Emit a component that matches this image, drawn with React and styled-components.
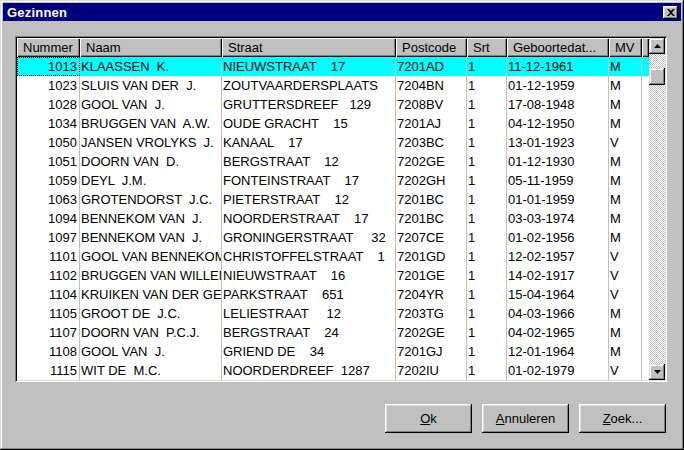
import React from "react";
import styled, { createGlobalStyle } from "styled-components";

const GlobalStyle = createGlobalStyle`
  body {
    margin: 0;
    background: #c0c0c0;
    font-family: "Liberation Sans", Arial, sans-serif;
  }
`;

const Window = styled.div`
  width: 684px;
  height: 450px;
  box-sizing: border-box;
  padding: 3px;
  background: #c0c0c0;
  display: flex;
  flex-direction: column;
  box-shadow: inset -1px -1px #000, inset 1px 1px #dfdfdf,
    inset -2px -2px #808080, inset 2px 2px #fff;
`;

const TitleBar = styled.div`
  height: 18px;
  background: #000080;
  display: flex;
  align-items: center;
  justify-content: space-between;
  padding: 0 3px 0 4px;
`;

const TitleText = styled.span`
  color: #fff;
  font-weight: bold;
  font-size: 13px;
  letter-spacing: 0.2px;
`;

const CloseButton = styled.div`
  width: 15px;
  height: 13px;
  background: #c0c0c0;
  display: flex;
  align-items: center;
  justify-content: center;
  box-shadow: inset -1px -1px #000, inset 1px 1px #fff,
    inset -2px -2px #808080, inset 2px 2px #dfdfdf;
`;

const Body = styled.div`
  flex: 1;
  display: flex;
  flex-direction: column;
  padding: 15px 14px 0 12px;
`;

const GridBox = styled.div`
  width: 652px;
  height: 346px;
  box-sizing: border-box;
  padding: 2px;
  background: #fff;
  display: flex;
  box-shadow: inset 1px 1px #808080, inset -1px -1px #fff,
    inset 2px 2px #000, inset -2px -2px #dfdfdf;
`;

const Table = styled.div`
  flex: 1;
  overflow: hidden;
`;

const cols = "63px 142px 174px 71px 40px 102px 33px 1fr";

const HeaderRow = styled.div`
  display: grid;
  grid-template-columns: ${cols};
  height: 19px;
`;

const HeaderCell = styled.div`
  background: #c0c0c0;
  box-sizing: border-box;
  padding-left: 6px;
  font-size: 13px;
  line-height: 19px;
  color: #000;
  white-space: nowrap;
  overflow: hidden;
  box-shadow: inset 1px 1px #fff, inset -1px -1px #000,
    inset -2px -2px #808080;
`;

const Row = styled.div`
  display: grid;
  grid-template-columns: ${cols};
  height: 19px;
  background: ${(p) => (p.$selected ? "#00ffff" : "#fff")};
`;

const Cell = styled.div`
  box-sizing: border-box;
  border-right: ${(p) => (p.$last ? "none" : "1px solid #c0c0c0")};
  font-size: 13px;
  line-height: 19px;
  color: #000;
  white-space: pre;
  overflow: hidden;
  padding: ${(p) => (p.$right ? "0 2px 0 0" : "0 0 0 1px")};
  text-align: ${(p) => (p.$right ? "right" : "left")};
  outline: ${(p) => (p.$focus ? "1px dotted #000" : "none")};
  outline-offset: -1px;
`;

const ScrollBar = styled.div`
  width: 16px;
  display: flex;
  flex-direction: column;
  background-color: #fff;
  background-image: repeating-conic-gradient(#c0c0c0 0 25%, #fff 0 50%);
  background-size: 2px 2px;
`;

const ScrollButton = styled.div`
  width: 16px;
  height: 16px;
  flex-shrink: 0;
  background: #c0c0c0;
  display: flex;
  align-items: center;
  justify-content: center;
  box-shadow: inset -1px -1px #000, inset 1px 1px #dfdfdf,
    inset -2px -2px #808080, inset 2px 2px #fff;
`;

const Thumb = styled(ScrollButton)`
  height: 17px;
  margin-top: 14px;
`;

const Track = styled.div`
  flex: 1;
`;

const ButtonRow = styled.div`
  display: flex;
  justify-content: flex-end;
  gap: 10px;
  margin-top: 22px;
  padding-right: 1px;
`;

const Button = styled.div`
  width: 87px;
  height: 29px;
  box-sizing: border-box;
  background: #c0c0c0;
  display: flex;
  align-items: center;
  justify-content: center;
  font-size: 13px;
  color: #000;
  box-shadow: inset -1px -1px #000, inset 1px 1px #fff,
    inset -2px -2px #808080, inset 2px 2px #dfdfdf;
`;

const headers = ["Nummer", "Naam", "Straat", "Postcode", "Srt", "Geboortedat...", "MV", ""];

const rows = [
  ["1013", "KLAASSEN  K.", "NIEUWSTRAAT    17", "7201AD", "1", "11-12-1961", "M"],
  ["1023", "SLUIS VAN DER  J.", "ZOUTVAARDERSPLAATS", "7204BN", "1", "01-12-1959", "M"],
  ["1028", "GOOL VAN  J.", "GRUTTERSDREEF   129", "7208BV", "1", "17-08-1948", "M"],
  ["1034", "BRUGGEN VAN  A.W.", "OUDE GRACHT    15", "7201AJ", "1", "04-12-1950", "M"],
  ["1050", "JANSEN VROLYKS  J.", "KANAAL    17", "7203BC", "1", "13-01-1923", "V"],
  ["1051", "DOORN VAN  D.", "BERGSTRAAT    12", "7202GE", "1", "01-12-1930", "M"],
  ["1059", "DEYL  J.M.", "FONTEINSTRAAT    17", "7202GH", "1", "05-11-1959", "M"],
  ["1063", "GROTENDORST  J.C.", "PIETERSTRAAT    12", "7201BC", "1", "01-01-1959", "M"],
  ["1094", "BENNEKOM VAN  J.", "NOORDERSTRAAT    17", "7201BC", "1", "03-03-1974", "M"],
  ["1097", "BENNEKOM VAN  J.", "GRONINGERSTRAAT     32", "7207CE", "1", "01-02-1956", "M"],
  ["1101", "GOOL VAN BENNEKOM", "CHRISTOFFELSTRAAT    1", "7201GD", "1", "12-02-1957", "V"],
  ["1102", "BRUGGEN VAN WILLEM", "NIEUWSTRAAT    16", "7201GE", "1", "14-02-1917", "V"],
  ["1104", "KRUIKEN VAN DER GEEST", "PARKSTRAAT    651", "7204YR", "1", "15-04-1964", "V"],
  ["1105", "GROOT DE  J.C.", "LELIESTRAAT     12", "7203TG", "1", "04-03-1966", "M"],
  ["1107", "DOORN VAN  P.C.J.", "BERGSTRAAT    24", "7202GE", "1", "04-02-1965", "M"],
  ["1108", "GOOL VAN  J.", "GRIEND DE    34", "7201GJ", "1", "12-01-1964", "M"],
  ["1115", "WIT DE  M.C.", "NOORDERDREEF  1287", "7202IU", "1", "01-02-1979", "V"],
];

const Arrow = ({ down }) => (
  <svg width="7" height="4" viewBox="0 0 7 4">
    <path d={down ? "M0 0H7L3.5 4Z" : "M3.5 0L7 4H0Z"} fill="#000" />
  </svg>
);

function App() {
  return (
    <>
      <GlobalStyle />
      <Window>
        <TitleBar>
          <TitleText>Gezinnen</TitleText>
          <CloseButton>
            <svg width="8" height="7" viewBox="0 0 8 7">
              <path d="M0 0H2L4 2L6 0H8L5 3.5L8 7H6L4 5L2 7H0L3 3.5Z" fill="#000" />
            </svg>
          </CloseButton>
        </TitleBar>
        <Body>
          <GridBox>
            <Table>
              <HeaderRow>
                {headers.map((h, i) => (
                  <HeaderCell key={i}>{h}</HeaderCell>
                ))}
              </HeaderRow>
              {rows.map((r, ri) => (
                <Row key={r[0]} $selected={ri === 0}>
                  {r.map((v, ci) => (
                    <Cell key={ci} $right={ci === 0} $focus={ri === 0 && ci === 0}>
                      {v}
                    </Cell>
                  ))}
                  <Cell $last />
                </Row>
              ))}
            </Table>
            <ScrollBar>
              <ScrollButton>
                <Arrow />
              </ScrollButton>
              <Thumb />
              <Track />
              <ScrollButton>
                <Arrow down />
              </ScrollButton>
            </ScrollBar>
          </GridBox>
          <ButtonRow>
            <Button>
              <span><u>O</u>k</span>
            </Button>
            <Button>
              <span><u>A</u>nnuleren</span>
            </Button>
            <Button>
              <span><u>Z</u>oek...</span>
            </Button>
          </ButtonRow>
        </Body>
      </Window>
    </>
  );
}

export default App;
